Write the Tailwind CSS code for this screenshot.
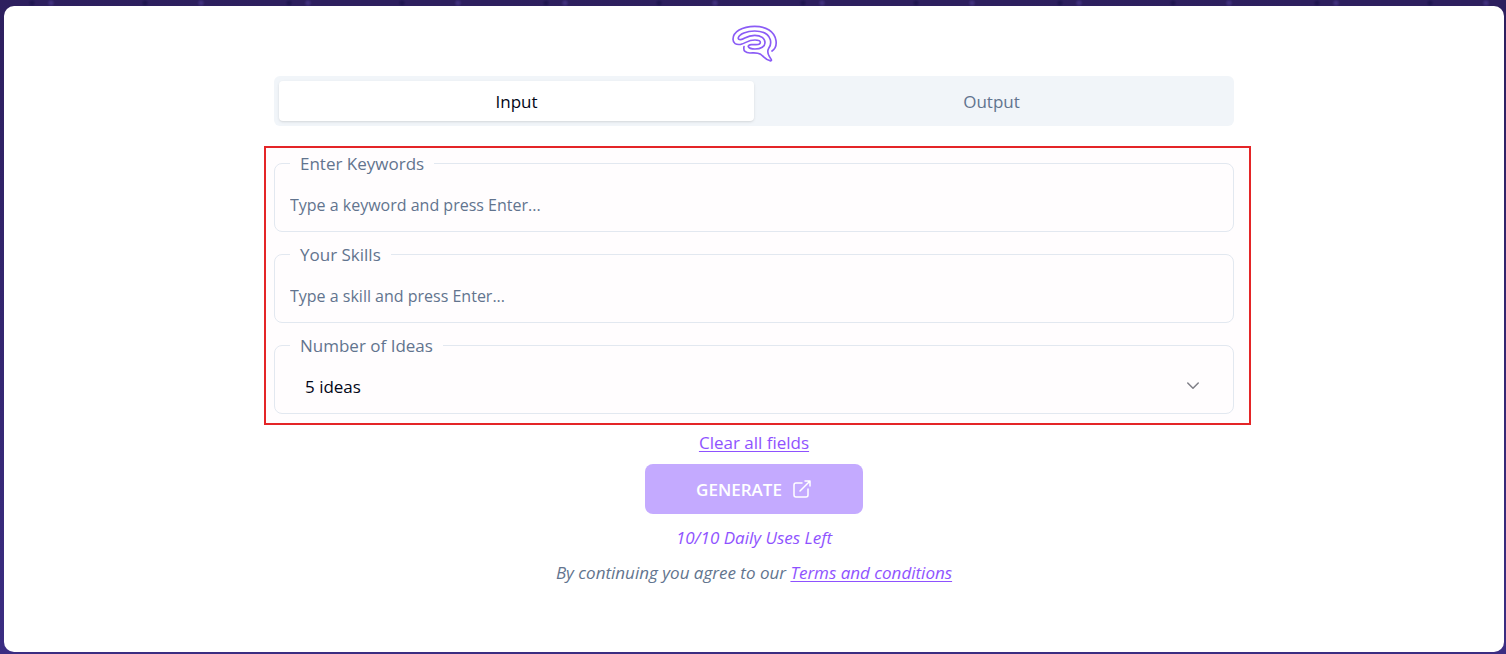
<!DOCTYPE html>
<html lang="en">
<head>
    <meta charset="UTF-8">
    <meta name="viewport" content="width=device-width, initial-scale=1.0">
    <script src="https://cdn.jsdelivr.net/npm/@tailwindcss/browser@4"></script>
    <title>Idea Generator</title>
</head>
<body class="min-h-screen flex flex-col bg-[#33246b] bg-[radial-gradient(circle_at_32px_3px,#1f1650_1px,transparent_4px),radial-gradient(circle_at_51px_3px,#40307c_1px,transparent_4px),radial-gradient(circle_at_145px_3px,#1f1650_1px,transparent_4px),radial-gradient(circle_at_201px_3px,#40307c_1px,transparent_4px),linear-gradient(#2d1f5e,#3b2d82)] bg-[length:257px_100%] pt-[6px] pb-[2px] pl-1 pr-[2px] font-['Open_Sans','Noto_Sans',sans-serif] text-[17px] leading-6">
    <main class="grow bg-white rounded-[10px] px-6 pt-[17px] pb-10">
        <div class="max-w-[960px] mx-auto flex flex-col items-center">
            <!--logo-->
            <svg class="w-12 h-10" viewBox="48 27 144 120" fill="none" stroke="#8b5cf6" stroke-width="5" stroke-linecap="round" stroke-linejoin="round" aria-hidden="true">
                <path d="M174 111C184 104 188 93 186 80C182 52 156 37 122 37C84 37 57 54 57 76C57 88 66 93 80 91C96 88 100 78 123 78C134 78 139 81 139 85C139 90 134 92 126 92H112C105 92 102 95 103 98C105 103 113 105 123 105C141 105 153 97 153 86C153 73 141 64 122 64C97 64 92 76 80 77C74 77 72 75 73 71C76 60 98 51 122 51C147 51 164 61 169 77C171 86 170 96 164 103C160 110 161 119 166 127L172 137C173 140 171 141 168 140C155 137 150 128 140 121C130 115 122 117 108 117C95 117 87 111 90 98"/>
            </svg>

            <!--tabs-->
            <div class="mt-[13px] w-full flex p-[5px] rounded-md bg-slate-100" role="tablist">
                <button type="button" role="tab" aria-selected="true" class="flex-1 h-10 pt-[2px] rounded-sm bg-white text-slate-950 shadow-sm">Input</button>
                <button type="button" role="tab" aria-selected="false" class="flex-1 h-10 pt-[2px] rounded-sm text-slate-500">Output</button>
            </div>

            <!--form fields-->
            <form class="relative w-full mt-[26px] flex flex-col gap-[10px]">
                <div class="absolute -top-[6px] -bottom-[11px] -left-[10px] -right-[17px] border-2 border-[#e42527] bg-[#fffdfe]"></div>
                <fieldset class="relative h-[81px] -mt-px border border-slate-200 rounded-lg px-[15px]">
                    <legend class="px-[10px] pt-px text-slate-500"><label for="keywords">Enter Keywords</label></legend>
                    <input id="keywords" type="text" placeholder="Type a keyword and press Enter..." class="block w-full mt-4 h-[26px] bg-transparent text-base placeholder:text-slate-500 outline-none">
                </fieldset>
                <fieldset class="relative h-[81px] border border-slate-200 rounded-lg px-[15px]">
                    <legend class="px-[10px] pt-px text-slate-500"><label for="skills">Your Skills</label></legend>
                    <input id="skills" type="text" placeholder="Type a skill and press Enter..." class="block w-full mt-4 h-[26px] bg-transparent text-base placeholder:text-slate-500 outline-none">
                </fieldset>
                <fieldset class="relative h-[81px] border border-slate-200 rounded-lg px-[15px]">
                    <legend class="px-[10px] pt-px text-slate-500"><label for="ideas">Number of Ideas</label></legend>
                    <div class="relative mt-4">
                        <select id="ideas" class="block w-full h-[26px] px-[15px] appearance-none bg-transparent text-slate-950 outline-none">
                            <option>5 ideas</option>
                            <option>10 ideas</option>
                            <option>15 ideas</option>
                        </select>
                        <svg class="absolute right-4 top-[3px] size-[18px] pointer-events-none" viewBox="0 0 24 24" fill="none" stroke="#7f7f87" stroke-width="2" stroke-linecap="round" stroke-linejoin="round" aria-hidden="true"><path d="m5 8 7 7 7-7"/></svg>
                    </div>
                </fieldset>
            </form>

            <a href="#" class="mt-[17px] text-violet-500 underline underline-offset-2">Clear all fields</a>

            <button type="button" class="mt-[9px] h-[50px] w-[218px] flex items-center justify-center gap-[10px] rounded-lg bg-[#c4aaff] text-white font-semibold">
                <span class="pt-[2px]">GENERATE</span>
                <svg class="size-5" viewBox="0 0 20 20" fill="none" stroke="currentColor" stroke-width="1.5" stroke-linecap="round" stroke-linejoin="round" aria-hidden="true">
                    <path d="M10 4H4a2 2 0 0 0-2 2v10a2 2 0 0 0 2 2h10a2 2 0 0 0 2-2v-6"/>
                    <path d="M13 2h5v5M18 2 8 12"/>
                </svg>
            </button>

            <p class="mt-3 italic text-violet-500">10/10 Daily Uses Left</p>
            <p class="mt-[11px] italic text-slate-500">By continuing you agree to our <a href="#" class="text-violet-500 underline underline-offset-2">Terms and conditions</a></p>
        </div>
    </main>
</body>
</html>
